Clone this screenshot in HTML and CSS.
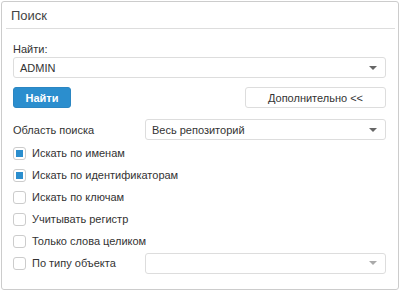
FILE: index.html
```html
<!DOCTYPE html>
<html lang="ru">

<head>
    <meta charset="UTF-8">
    <title>Поиск</title>
    <link rel="stylesheet" href="styles.css">
</head>

<body>
    <section class="panel">
        <header class="panel-head">Поиск</header>
        <div class="panel-body">
            <label class="field-label" for="find">Найти:</label>
            <div class="combo">
                <span class="combo-text">ADMIN</span>
                <span class="combo-arrow"></span>
            </div>

            <div class="btn-row">
                <button type="button" class="btn btn-primary">Найти</button>
                <button type="button" class="btn btn-plain">Дополнительно &lt;&lt;</button>
            </div>

            <div class="line-row area-row">
                <span class="line-label">Область поиска</span>
                <div class="combo combo-grow">
                    <span class="combo-text">Весь репозиторий</span>
                    <span class="combo-arrow"></span>
                </div>
            </div>

            <!-- options -->
            <div class="check-row"><span class="check checked"></span>Искать по именам</div>
            <div class="check-row"><span class="check checked"></span>Искать по идентификаторам</div>
            <div class="check-row"><span class="check"></span>Искать по ключам</div>
            <div class="check-row"><span class="check"></span>Учитывать регистр</div>
            <div class="check-row"><span class="check"></span>Только слова целиком</div>
            <div class="line-row type-row">
                <div class="check-row line-label"><span class="check"></span>По типу объекта</div>
                <div class="combo combo-grow combo-disabled">
                    <span class="combo-text"></span>
                    <span class="combo-arrow"></span>
                </div>
            </div>
        </div>
    </section>
</body>

</html>
```

FILE: styles.css
```css
* {
    margin: 0;
    padding: 0;
    box-sizing: border-box;
}

body {
    background-color: #ffffff;
    color: #333333;
    font-family: 'Liberation Sans', Arial, sans-serif;
    font-size: 11px;
}

.panel {
    width: 398px;
    height: 289px;
    margin: 1px 0 0 1px;
    border: 1px solid #cccccc;
    border-radius: 3px;
}

.panel-head {
    height: 27px;
    margin: 0 3px 0 4px;
    padding: 6px 0 0 5px;
    font-size: 13px;
    color: #444444;
    border-bottom: 1px solid #dddddd;
}

.panel-body {
    padding: 13px 12px 0 11px;
}

.field-label {
    display: block;
    height: 15px;
    line-height: 15px;
}

.combo {
    display: flex;
    align-items: center;
    justify-content: space-between;
    height: 21px;
    padding: 0 8px 0 6px;
    border: 1px solid #dddddd;
    border-radius: 3px;
    background-color: #ffffff;
}

.combo-arrow {
    width: 0;
    height: 0;
    border-left: 4px solid transparent;
    border-right: 4px solid transparent;
    border-top: 4px solid #666666;
}

.combo-disabled .combo-arrow {
    border-top-color: #aaaaaa;
}

.combo-grow {
    flex: 1;
}

.btn-row {
    display: flex;
    justify-content: space-between;
    margin-top: 9px;
}

.btn {
    height: 21px;
    border-radius: 3px;
    font-family: 'Liberation Sans', Arial, sans-serif;
    font-size: 11px;
}

.btn-primary {
    width: 58px;
    border: 1px solid #2b86c2;
    background-color: #2b8ece;
    color: #ffffff;
    font-weight: bold;
}

.btn-plain {
    width: 141px;
    border: 1px solid #dddddd;
    background-color: #ffffff;
    color: #333333;
}

.line-row {
    display: flex;
    align-items: center;
}

.line-label {
    width: 132px;
}

.area-row {
    margin-top: 11px;
    margin-bottom: 2px;
}

.check-row {
    display: flex;
    align-items: center;
    height: 22px;
}

.check {
    position: relative;
    width: 13px;
    height: 13px;
    margin-right: 6px;
    border: 1px solid #cccccc;
    border-radius: 3px;
    background-color: #ffffff;
}

.checked::after {
    content: "";
    position: absolute;
    left: 2px;
    top: 2px;
    width: 7px;
    height: 7px;
    background-color: #2b8ece;
}

.type-row {
    height: 22px;
}
```
